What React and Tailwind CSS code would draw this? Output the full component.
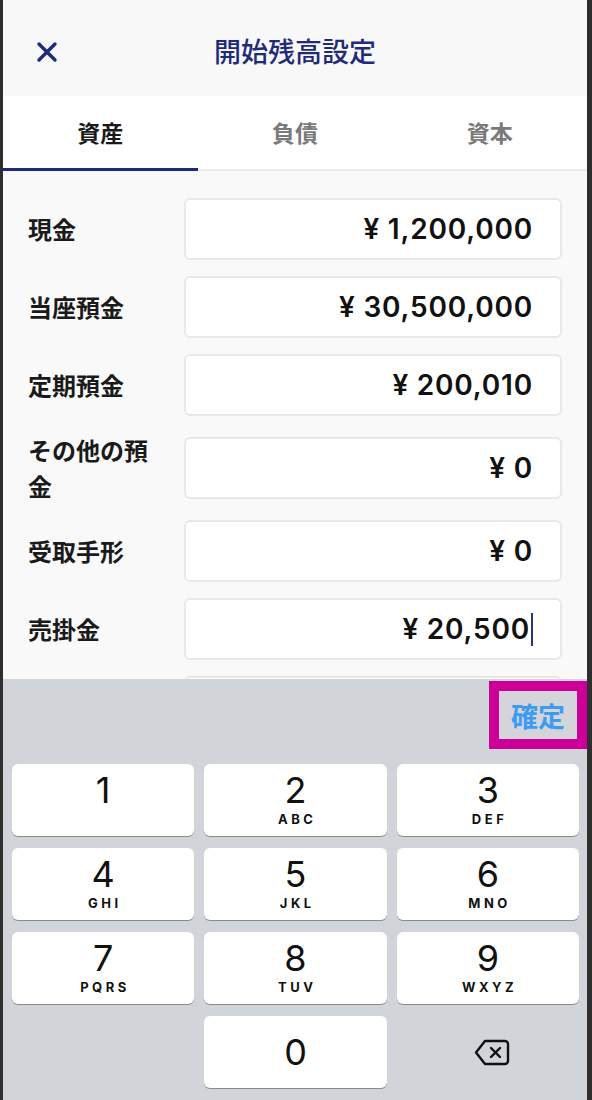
import React from "react";

const jp = { fontFamily: '"Noto Sans CJK JP", "Noto Sans", sans-serif' };
const num = { fontFamily: 'Inter, "Noto Sans CJK JP", sans-serif' };

const rows = [
  { label: "現金", value: "¥ 1,200,000" },
  { label: "当座預金", value: "¥ 30,500,000" },
  { label: "定期預金", value: "¥ 200,010" },
  { label: "その他の預金", value: "¥ 0" },
  { label: "受取手形", value: "¥ 0" },
  { label: "売掛金", value: "¥ 20,500", active: true },
  { label: "", value: "" },
];

const keys = [
  ["1", ""],
  ["2", "ABC"],
  ["3", "DEF"],
  ["4", "GHI"],
  ["5", "JKL"],
  ["6", "MNO"],
  ["7", "PQRS"],
  ["8", "TUV"],
  ["9", "WXYZ"],
];

function Key({ digit, letters }) {
  return (
    <div className="h-[72px] bg-white rounded-[6px] shadow-[0_1px_0_#898a8d] flex flex-col items-center justify-start pt-[5px]">
      <span className="text-[36px] leading-[42px] text-[#111]" style={num}>{digit}</span>
      {letters && (
        <span className="text-[13px] leading-[16px] font-bold tracking-[3.5px] pl-[3.5px] text-[#111]" style={num}>{letters}</span>
      )}
    </div>
  );
}

export default function App() {
  return (
    <div className="w-[592px] h-[1100px] flex bg-[#2e2e2e] overflow-hidden">
      <div className="ml-[3px] w-[584px] h-full flex flex-col bg-[#f9f9f9]">
        {/* Header */}
        <div className="h-[96px] flex items-center relative bg-[#f8f8f8] shrink-0">
          <button className="absolute left-[30px] top-[38px] w-[28px] h-[28px] flex items-center justify-center">
            <svg width="22" height="22" viewBox="0 0 22 22" fill="none" stroke="#1f2a78" strokeWidth="3.4" strokeLinecap="round">
              <path d="M3 3 L19 19 M19 3 L3 19" />
            </svg>
          </button>
          <div className="flex-1 text-center pt-[6px] text-[27px] font-medium text-[#1f2a78]" style={jp}>開始残高設定</div>
        </div>

        {/* Tabs */}
        <div className="h-[75px] bg-white flex border-b-2 border-[#ececec] shrink-0">
          <div className="flex-1 flex items-center justify-center text-[23px] font-bold text-[#1a1a1a] border-b-[3px] border-[#1f2a78] -mb-[2px]" style={jp}>資産</div>
          <div className="flex-1 flex items-center justify-center text-[23px] font-bold text-[#7a7a7a]" style={jp}>負債</div>
          <div className="flex-1 flex items-center justify-center text-[23px] font-bold text-[#7a7a7a]" style={jp}>資本</div>
        </div>

        {/* Rows */}
        <div className="flex-1 overflow-hidden pt-[27px] flex flex-col gap-[16px]">
          {rows.map((r, i) => (
            <div key={i} className="flex items-center pl-[25px] pr-[25px] shrink-0">
              <div className="w-[156px] pr-[22px] text-[24px] leading-[36px] font-bold text-[#1a1a1a]" style={jp}>{r.label}</div>
              <div className="flex-1 h-[62px] bg-white border-2 border-[#e8e8e8] rounded-[6px] flex items-center justify-end pr-[27px]">
                <span className="text-[28px] font-semibold text-[#111] tracking-[0.8px]" style={num}>{r.value}</span>
                {r.active && <span className="w-[2px] h-[33px] bg-[#2a3480] ml-[1px]" />}
              </div>
            </div>
          ))}
        </div>

        {/* Keyboard */}
        <div className="h-[421px] bg-[#d1d4d9] shrink-0 flex flex-col">
          <div className="h-[85px] flex justify-end items-start pt-[2px]">
            <div className="w-[98px] h-[68px] border-[10px] border-[#cc0099] flex items-center justify-center bg-[#d3d5da]">
              <span className="text-[27px] leading-none font-semibold text-[#3d9cf2]" style={jp}>確定</span>
            </div>
          </div>
          <div className="grid grid-cols-3 gap-x-[10px] gap-y-[12px] pl-[9px] pr-[8px]">
            {keys.map(([d, l]) => (
              <Key key={d} digit={d} letters={l} />
            ))}
            <div />
            <div className="h-[72px] bg-white rounded-[6px] shadow-[0_1px_0_#898a8d] flex items-center justify-center">
              <span className="text-[36px] leading-[42px] text-[#111]" style={num}>0</span>
            </div>
            <div className="h-[72px] flex items-center justify-center pl-[8px]">
              <svg width="36" height="27" viewBox="0 0 36 27" fill="none" stroke="#111" strokeWidth="2.4" strokeLinejoin="round" strokeLinecap="round">
                <path d="M11 2 H31 A3 3 0 0 1 34 5 V22 A3 3 0 0 1 31 25 H11 L2 13.5 Z" />
                <path d="M17 9 L26 18 M26 9 L17 18" />
              </svg>
            </div>
          </div>
        </div>
      </div>
    </div>
  );
}
